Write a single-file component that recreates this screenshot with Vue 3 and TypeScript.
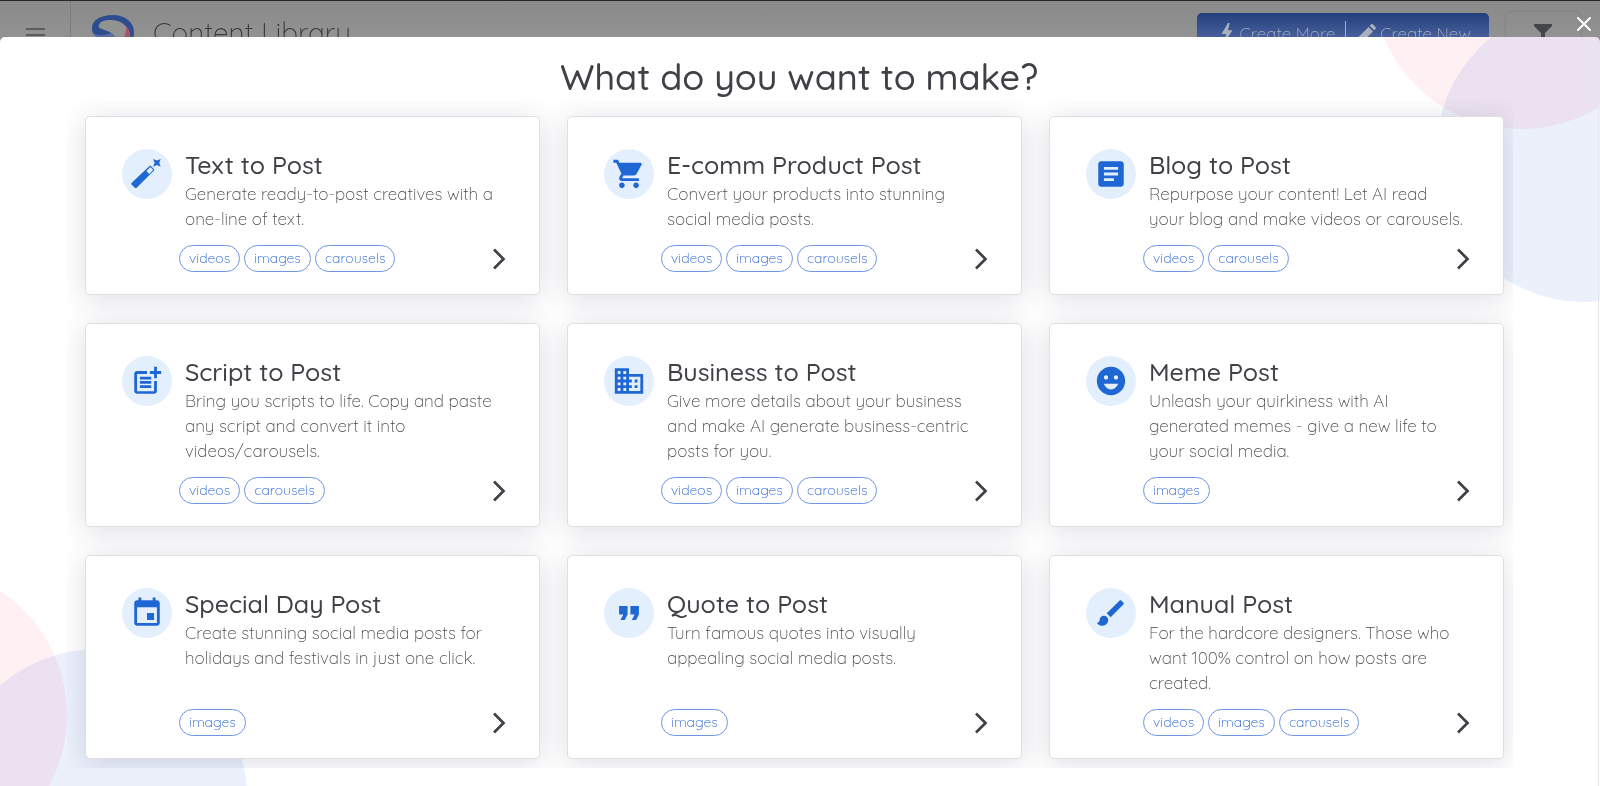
<script setup lang="ts">
type Format = 'videos' | 'images' | 'carousels'

interface PostType {
  title: string
  text: string
  formats: Format[]
  icon: string
}

const icons: Record<string, string> = {
  cart: 'M7 18c-1.1 0-1.99.9-1.99 2S5.9 22 7 22s2-.9 2-2-.9-2-2-2zM1 2v2h2l3.6 7.59-1.35 2.45c-.16.28-.25.61-.25.96 0 1.1.9 2 2 2h12v-2H7.42c-.14 0-.25-.11-.25-.25l.03-.12.9-1.63h7.45c.75 0 1.41-.41 1.75-1.03l3.58-6.49c.08-.14.12-.31.12-.48 0-.55-.45-1-1-1H5.21l-.94-2H1zm16 16c-1.1 0-1.99.9-1.99 2s.89 2 1.99 2 2-.9 2-2-.9-2-2-2z',
  article: 'M19 3H5c-1.1 0-2 .9-2 2v14c0 1.1.9 2 2 2h14c1.1 0 2-.9 2-2V5c0-1.1-.9-2-2-2zm-5 14H7v-2h7v2zm3-4H7v-2h10v2zm0-4H7V7h10v2z',
  script: 'M17 19.22H5V7h7V5H5c-1.1 0-2 .9-2 2v12c0 1.1.9 2 2 2h12c1.1 0 2-.9 2-2v-7h-2v7.22zM19 2h-2v3h-3v2h3v3h2V7h3V5h-3V2zM7 9h8v2H7zM7 12h8v2H7zM7 15h8v2H7z',
  business: 'M12 7V3H2v18h20V7H12zM6 19H4v-2h2v2zm0-4H4v-2h2v2zm0-4H4V9h2v2zm0-4H4V5h2v2zm4 12H8v-2h2v2zm0-4H8v-2h2v2zm0-4H8V9h2v2zm0-4H8V5h2v2zm10 12h-8v-2h2v-2h-2v-2h2v-2h-2V9h8v10zm-2-8h-2v2h2v-2zm0 4h-2v2h2v-2z',
  smile: 'M11.99 2C6.47 2 2 6.48 2 12c0 5.52 4.47 10 9.99 10C17.52 22 22 17.52 22 12c0-5.52-4.48-10-10.01-10zM8.5 8c.83 0 1.5.67 1.5 1.5S9.33 11 8.5 11 7 10.33 7 9.5 7.67 8 8.5 8zM12 18c-2.28 0-4.22-1.66-5-4h10c-.78 2.34-2.72 4-5 4zm3.5-7c-.83 0-1.5-.67-1.5-1.5S14.67 8 15.5 8s1.5.67 1.5 1.5-.67 1.5-1.5 1.5z',
  calendar: 'M17 12h-5v5h5v-5zM16 1v2H8V1H6v2H5c-1.11 0-1.99.9-1.99 2L3 19c0 1.1.89 2 2 2h14c1.1 0 2-.9 2-2V5c0-1.1-.9-2-2-2h-1V1h-2zm3 18H5V8h14v11z',
  quote: 'M6 17h3l2-4V7H5v6h3zm8 0h3l2-4V7h-6v6h3z',
  brush: 'M7 14c-1.66 0-3 1.34-3 3 0 1.31-1.16 2-2 2 .92 1.22 2.49 2 4 2 2.21 0 4-1.79 4-4 0-1.66-1.34-3-3-3zm13.71-9.37l-1.34-1.34c-.39-.39-1.02-.39-1.41 0L9 12.25 11.75 15l8.96-8.96c.39-.39.39-1.02 0-1.41z',
  wand: 'M1.2 18.2 13.6 6.5c.4-.4.9-.4 1.3 0l1.9 1.9c.4.4.4.9 0 1.3L4.7 21.7c-.4.4-.9.4-1.3 0l-2.2-2.2c-.4-.4-.4-.9 0-1.3zM11.6 9.900l2 2.100 2.400-2.400c.3-.3.3-.6 0-.9l-1.200-1.200c-.3-.3-.6-.3-.9 0zM16.300 1.400l2.700 1.100 2.700-1.100-1.100 2.700 1.100 2.700L19 5.700l-2.700 1.100 1.100-2.700z',
}

const postTypes: PostType[] = [
  { title: 'Text to Post', icon: 'wand', formats: ['videos', 'images', 'carousels'], text: 'Generate ready-to-post creatives with a\none-line of text.' },
  { title: 'E-comm Product Post', icon: 'cart', formats: ['videos', 'images', 'carousels'], text: 'Convert your products into stunning\nsocial media posts.' },
  { title: 'Blog to Post', icon: 'article', formats: ['videos', 'carousels'], text: 'Repurpose your content! Let AI read\nyour blog and make videos or carousels.' },
  { title: 'Script to Post', icon: 'script', formats: ['videos', 'carousels'], text: 'Bring you scripts to life. Copy and paste\nany script and convert it into\nvideos/carousels.' },
  { title: 'Business to Post', icon: 'business', formats: ['videos', 'images', 'carousels'], text: 'Give more details about your business\nand make AI generate business-centric\nposts for you.' },
  { title: 'Meme Post', icon: 'smile', formats: ['images'], text: 'Unleash your quirkiness with AI\ngenerated memes - give a new life to\nyour social media.' },
  { title: 'Special Day Post', icon: 'calendar', formats: ['images'], text: 'Create stunning social media posts for\nholidays and festivals in just one click.' },
  { title: 'Quote to Post', icon: 'quote', formats: ['images'], text: 'Turn famous quotes into visually\nappealing social media posts.' },
  { title: 'Manual Post', icon: 'brush', formats: ['videos', 'images', 'carousels'], text: 'For the hardcore designers. Those who\nwant 100% control on how posts are\ncreated.' },
]
</script>

<template>
  <div class="page">
    <header class="topbar">
      <button class="menu" type="button" aria-label="Menu">
        <svg width="20" height="20" viewBox="0 0 20 20" stroke="currentColor" stroke-width="2"><path d="M0 6h19M0 12h19M0 18h19" /></svg>
      </button>
      <svg class="logo" width="44" height="42" viewBox="0 0 44 42">
        <path d="M22 1C35 1 43 9 43 18c0 12-9 21-21 21C14 39 10 30 8 24 3 22 1 19 1 14 1 6 10 1 22 1z" fill="#2e4d91" />
        <path d="M2 18c4 5 12 3 18 1l5 5 4 12C18 40 10 34 8 24 5 23 3 21 2 18z" fill="#5d6da3" />
        <path d="M8 11C9 7 14 6 20 6c9 0 17 5 17 12 0 6-3 12-9 16l-4-11c-4-6-9-6-13-8-3-1-4-2-3-4z" fill="#929292" />
        <path d="M35 12c4 4 5 8 4 12l-5 9-5-5c4-4 7-9 6-16z" fill="#a75368" />
      </svg>
      <h1>Content Library</h1>
      <div class="create">
        <button type="button">
          <svg width="12" height="20" viewBox="0 0 12 22" fill="currentColor"><path d="M7 0 0 12h5L3 22l9-14H7l2-8z" /></svg>
          Create More
        </button>
        <button type="button">
          <svg width="18" height="18" viewBox="0 0 18 18" fill="currentColor"><path d="M0 18v-4.500L10.500 3 15 7.500 4.500 18zM11.700 1.800l1.300-1.300c.6-.6 1.400-.6 2 0l2.500 2.500c.6.6.6 1.400 0 2l-1.300 1.300z" /></svg>
          Create New
        </button>
      </div>
      <button class="filter" type="button" aria-label="Filter">
        <svg width="18" height="18" viewBox="0 0 18 18" fill="currentColor"><path d="M0 0h18v2l-7 7v9l-4-3V9L0 2z" /></svg>
      </button>
    </header>

    <button class="close" type="button" aria-label="Close">
      <svg width="16" height="16" viewBox="0 0 16 16" fill="none" stroke="currentColor" stroke-width="2" stroke-linecap="round"><path d="M2 2l12 12M14 2 2 14" /></svg>
    </button>

    <main class="dialog" role="dialog" aria-labelledby="dialog-title">
      <i class="blob pink upper"></i>
      <i class="blob blue upper"></i>
      <i class="blob pink lower"></i>
      <i class="blob blue lower"></i>
      <div class="scroller">
        <h2 id="dialog-title">What do you want to make?</h2>
        <div class="grid">
          <article v-for="post in postTypes" :key="post.title" class="card">
            <div class="head">
              <span class="badge">
                <svg width="34" height="34" viewBox="0 0 24 24" fill="currentColor" fill-rule="evenodd"><path :d="icons[post.icon]" /></svg>
              </span>
              <div>
                <h3>{{ post.title }}</h3>
                <p>{{ post.text }}</p>
              </div>
            </div>
            <div class="foot">
              <span v-for="format in post.formats" :key="format" class="tag">{{ format }}</span>
              <button class="go" type="button" :aria-label="post.title">
                <svg width="14" height="22" viewBox="0 0 14 22" fill="none" stroke="currentColor" stroke-width="2.700"><path d="M2 1.500l9.500 9.500L2 20.500" /></svg>
              </button>
            </div>
          </article>
        </div>
      </div>
    </main>
  </div>
</template>

<style>
body {
  margin: 0;
}
</style>

<style scoped>
.page {
  position: relative;
  min-height: 100vh;
  overflow: hidden;
  box-sizing: border-box;
  border-top: 1px solid #28282c;
  background: #8e8e8e;
  color: #3f4147;
  font-family: Quicksand, Lato, "Open Sans", sans-serif;
}

button {
  margin: 0;
  padding: 0;
  border: 0;
  background: none;
  color: inherit;
  font: inherit;
  cursor: pointer;
}

svg {
  display: block;
}

h1,
h2,
h3,
p {
  margin: 0;
}

.topbar {
  display: flex;
  align-items: center;
  height: 64px;
  padding-right: 20px;
  background: linear-gradient(#8a8a8a, #929292 36px);
}

.menu {
  display: flex;
  align-items: center;
  align-self: stretch;
  width: 71px;
  padding-left: 26px;
  box-sizing: border-box;
  border-right: 1px solid #7c7c7c;
  color: #5c5c5f;
}

.logo {
  margin: 4px 18px 0 20px;
}

h1 {
  flex: 1;
  font-size: 28px;
  font-weight: 300;
  line-height: 36px;
  color: #38393c;
}

.create {
  display: flex;
  align-items: center;
  height: 40px;
  padding: 0 18px 0 24px;
  border-radius: 5px;
  background: linear-gradient(#233f7b, #47609c 24px);
  color: #a9afbe;
  font-size: 17px;
  font-weight: 300;
}

.create button {
  display: flex;
  align-items: center;
  gap: 7px;
  height: 24px;
}

.create button + button {
  gap: 4px;
  margin-left: 10px;
  padding-left: 12px;
  border-left: 1px solid #a9afbe;
}

.filter {
  display: flex;
  justify-content: center;
  align-items: center;
  width: 74px;
  height: 42px;
  margin-left: 17px;
  border-radius: 5px;
  box-shadow: 0 0 3px #747474;
  color: #45464a;
}

.close {
  position: absolute;
  top: 15px;
  right: 8px;
  color: #fff;
}

.dialog {
  position: absolute;
  inset: 36px 0 0;
  overflow: hidden;
  border-radius: 5px 5px 0 0;
  background: #fff;
}

.blob {
  position: absolute;
  width: 298px;
  height: 298px;
  border-radius: 50%;
  mix-blend-mode: multiply;
}

.pink {
  background: #fff0f4;
}

.blue {
  background: #ebf0fb;
}

.pink.upper {
  top: -206px;
  right: -70px;
}

.blue.upper {
  top: -33px;
  right: -134px;
}

.pink.lower {
  bottom: -78px;
  left: -231px;
}

.blue.lower {
  bottom: -161px;
  left: -51px;
}

.scroller {
  position: relative;
  min-height: 100%;
  margin-right: 1px;
  padding-top: 17px;
  box-sizing: border-box;
  border-right: 1px solid #e6e6ec;
}

h2 {
  font-size: 36px;
  font-weight: 500;
  line-height: 45px;
  text-align: center;
}

.grid {
  display: grid;
  grid-template-columns: repeat(3, 1fr);
  gap: 28px 27px;
  margin: 0 85px 0 67px;
  padding: 17px 9px 9px 18px;
  overflow: hidden;
}

.card {
  display: flex;
  flex-direction: column;
  padding: 32px 33px 22px 36px;
  border: 1px solid #dfdfe3;
  border-radius: 5px;
  background: #fff;
  box-shadow: 0 4px 28px rgba(50, 50, 93, 0.16);
}

.head {
  display: flex;
  gap: 13px;
}

.badge {
  display: flex;
  flex: none;
  justify-content: center;
  align-items: center;
  width: 50px;
  height: 50px;
  border-radius: 50%;
  background: #e3effd;
  color: #1f67d2;
}

h3 {
  font-size: 25px;
  font-weight: 500;
  line-height: 32px;
  color: #3f4147;
}

p {
  font-size: 17px;
  font-weight: 300;
  line-height: 25px;
  white-space: pre-line;
  color: #4a4a4c;
}

.foot {
  display: flex;
  align-items: center;
  gap: 4px;
  margin-top: auto;
  padding: 14px 0 0 57px;
}

.tag {
  padding: 0 9px;
  border: 1px solid #6f96e2;
  border-radius: 14px;
  font-size: 14px;
  font-weight: 300;
  line-height: 25px;
  color: #2460d0;
}

.go {
  margin-left: auto;
}
</style>
